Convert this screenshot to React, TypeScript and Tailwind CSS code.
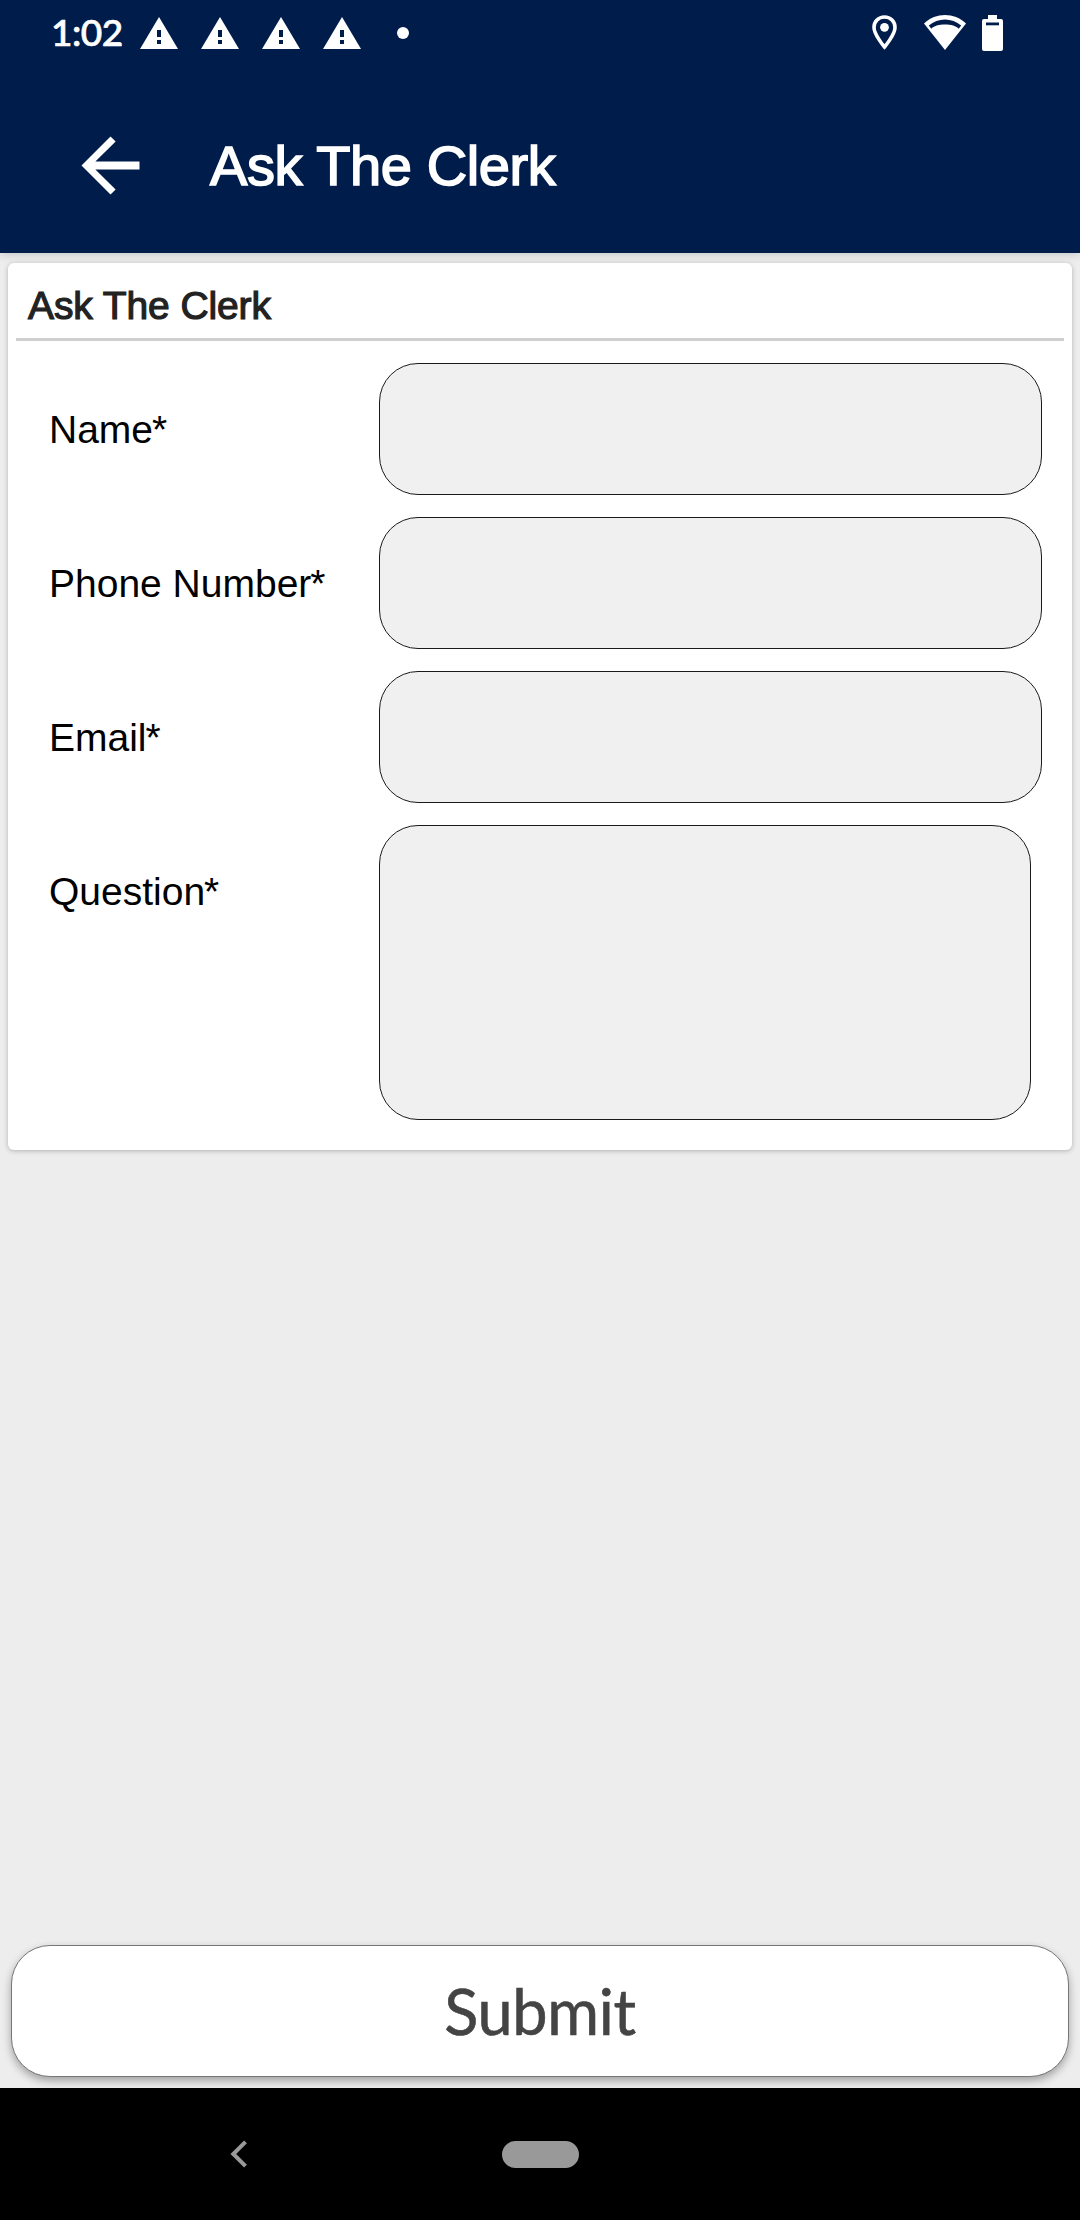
import React from "react";

const WarningIcon = () => (
  <svg className="h-8 w-[38px]" viewBox="0 0 38 32" fill="none">
    <path d="M19 0L38 32H0L19 0z" fill="#fff" />
    <path d="M17 13h4v7h-4zM17 23h4v4h-4z" fill="#001c4a" />
  </svg>
);

const StatusBar = () => {
  return (
    <div className="flex h-[67px] items-start pl-[51px] pr-[77px] text-white">
      <span className="mt-[9px] w-[89px] whitespace-nowrap font-['Lato',sans-serif] text-[37px] leading-[46px] tracking-[-0.5px] font-medium [-webkit-text-stroke:0.7px_white]">
        1:02
      </span>
      <div className="mt-[17px] flex gap-[23px]">
        <WarningIcon />
        <WarningIcon />
        <WarningIcon />
        <WarningIcon />
      </div>
      <span className="ml-[36px] mt-[27px] size-3 rounded-full bg-white" />
      <div className="ml-auto mt-[15px] flex items-start">
        <svg className="h-[35px] w-[25px]" viewBox="0 0 25 35" fill="none">
          <path
            d="M12.5 2C6.4 2 2 6.6 2 12.4 2 19.5 12.5 32 12.5 32S23 19.5 23 12.4C23 6.6 18.6 2 12.5 2z"
            stroke="#fff"
            strokeWidth="3.6"
          />
          <circle cx="12.5" cy="12.3" r="4.4" fill="#fff" />
        </svg>
        <svg
          className="ml-[27px] h-[35px] w-[42px]"
          viewBox="0 0 42 35"
          fill="none"
        >
          <path d="M0 8.5C12 -2.8 30 -2.8 42 8.5L21 35z" fill="#fff" />
          <path
            d="M4.8 10.6C14 2.4 28 2.4 37.200 10.600L34.700 13.800C30.500 8 11.500 8 7.300 13.800z"
            fill="#001c4a"
          />
        </svg>
        <svg
          className="ml-[16px] h-[36px] w-[21px]"
          viewBox="0 0 21 36"
          fill="none"
        >
          <path
            d="M6 0h9v4h4a2 2 0 0 1 2 2v28a2 2 0 0 1-2 2H2a2 2 0 0 1-2-2V6a2 2 0 0 1 2-2h4z"
            fill="#fff"
          />
          <path d="M4 7.500h13v2.800H4z" fill="#001c4a" />
        </svg>
      </div>
    </div>
  );
};

const Header = () => {
  return (
    <header className="relative z-10 h-[253px] bg-[#001c4a] shadow-[0_1px_9px_rgba(0,20,50,0.2)]">
      <StatusBar />
      <div className="flex h-[196px] items-center pl-[67px]">
        <button type="button" aria-label="Back">
          <svg className="size-[87px]" viewBox="0 0 24 24" fill="#fff">
            <path d="M20 10.9H7.83l5.59-5.49L12 4l-8 8 8 8 1.41-1.41L7.83 13.1H20z" />
          </svg>
        </button>
        <h1 className="ml-[56px] mt-[2px] whitespace-nowrap text-[56px] leading-[64px] tracking-[-0.4px] text-white [-webkit-text-stroke:1.6px_white]">
          Ask The Clerk
        </h1>
      </div>
    </header>
  );
};

const Field = ({
  label,
  multiline,
}: {
  label: string;
  multiline?: boolean;
}) => {
  return (
    <label className="flex items-start">
      <span className="w-[330px] whitespace-nowrap pt-px text-[39px] leading-[132px] text-black">
        {label}
        <span className="-ml-px">*</span>
      </span>
      {multiline ? (
        <textarea className="block h-[295px] w-[652px] resize-none rounded-[39px] border border-[#1a1a1a] bg-[#f0f0f0] px-8 py-6 outline-none" />
      ) : (
        <input
          type="text"
          className="h-[132px] w-[663px] rounded-[39px] border border-[#1a1a1a] bg-[#f0f0f0] px-8 outline-none"
        />
      )}
    </label>
  );
};

const App = () => {
  return (
    <div className="flex h-[2220px] w-[1080px] flex-col overflow-hidden bg-[#ededed] font-['Liberation_Sans',Arial,sans-serif]">
      <Header />
      <main className="flex flex-1 flex-col pt-[10px]">
        <section className="mx-2 h-[887px] rounded-[6px] bg-white px-2 shadow-[0_1px_5px_rgba(0,0,0,0.25)]">
          <h2 className="h-[78px] border-b-[3px] border-[#cfcfcf] pl-[12px] text-[39px] leading-[86px] tracking-[-0.1px] text-[#222] [-webkit-text-stroke:1.2px_#222]">
            Ask The Clerk
          </h2>
          <form className="flex flex-col pl-[33px] pt-[22px]">
            <div className="grid auto-rows-[154px]">
              <Field label="Name" />
              <Field label="Phone Number" />
              <Field label="Email" />
              <Field label="Question" multiline />
            </div>
          </form>
        </section>
        <button
          type="button"
          className="mx-[11px] mb-[11px] mt-auto h-[132px] rounded-[39px] border border-[#777] bg-white pb-[2px] font-['Lato',sans-serif] text-[63px] leading-none tracking-[-0.3px] text-[#444] shadow-[0_4px_9px_rgba(0,0,0,0.32)] [-webkit-text-stroke:0.6px_#444]"
        >
          Submit
        </button>
      </main>
      <nav className="relative z-10 flex h-[132px] items-center bg-black pl-[230px]">
        <svg className="h-[28px] w-[18px]" viewBox="0 0 18 28" fill="none">
          <path d="M15.5 1.800L3.300 14l12.200 12.200" stroke="#999" strokeWidth="4" />
        </svg>
        <span className="ml-[254px] h-[27px] w-[77px] rounded-full bg-[#999]" />
      </nav>
    </div>
  );
};

export default App;
